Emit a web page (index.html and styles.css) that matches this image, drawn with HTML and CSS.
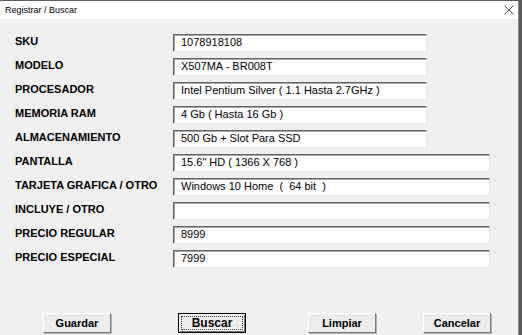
FILE: index.html
```html
<!DOCTYPE html>
<html>
<head>
<meta charset="utf-8">
<link rel="stylesheet" href="styles.css">
</head>
<body>
<div class="window">
  <div class="titlebar">
    <span class="title">Registrar / Buscar</span>
    <svg class="close" width="10" height="10" viewBox="0 0 10 10"><path d="M0.5 0.5 L9.5 9.5 M9.5 0.5 L0.5 9.5" stroke="#333" stroke-width="0.9"/></svg>
  </div>
  <div class="body">
    <div class="form">
      <div class="row"><span class="label">SKU</span><div class="field short">1078918108</div></div>
      <div class="row"><span class="label">MODELO</span><div class="field short">X507MA - BR008T</div></div>
      <div class="row"><span class="label">PROCESADOR</span><div class="field short">Intel Pentium Silver ( 1.1 Hasta 2.7GHz )</div></div>
      <div class="row"><span class="label">MEMORIA RAM</span><div class="field short">4 Gb ( Hasta 16 Gb )</div></div>
      <div class="row"><span class="label">ALMACENAMIENTO</span><div class="field short">500 Gb + Slot Para SSD</div></div>
      <div class="row"><span class="label">PANTALLA</span><div class="field long">15.6" HD ( 1366 X 768 )</div></div>
      <div class="row"><span class="label">TARJETA GRAFICA / OTRO</span><div class="field long">Windows 10 Home&nbsp; (&nbsp; 64 bit&nbsp; )</div></div>
      <div class="row"><span class="label">INCLUYE / OTRO</span><div class="field long"></div></div>
      <div class="row"><span class="label">PRECIO REGULAR</span><div class="field long">8999</div></div>
      <div class="row"><span class="label">PRECIO ESPECIAL</span><div class="field long">7999</div></div>
    </div>
    <div class="buttons">
      <div class="btn b-guardar">Guardar</div>
      <div class="btn default b-buscar"><span class="focus">Buscar</span></div>
      <div class="btn b-limpiar">Limpiar</div>
      <div class="btn b-cancelar">Cancelar</div>
    </div>
  </div>
</div>
</body>
</html>
```

FILE: styles.css
```css
html, body {
  margin: 0;
  padding: 0;
  background: #5a5a5a;
}
body {
  width: 522px;
  height: 335px;
  overflow: hidden;
}
.window {
  width: 518px;
  height: 334px;
  margin-top: 1px;
  border-right: 1px solid #8c8c8c;
  background: #f0f0f0;
  display: flex;
  flex-direction: column;
  font-family: "Liberation Sans", Arial, sans-serif;
}
.titlebar {
  height: 18px;
  background: #ffffff;
  display: flex;
  align-items: center;
  justify-content: space-between;
  padding: 0 4px 0 5px;
}
.title {
  font-size: 9px;
  color: #000;
}
.close {
  display: block;
}
.body {
  flex: 1;
  display: flex;
  flex-direction: column;
  padding: 15px 0 2px 0;
}
.form {
  display: flex;
  flex-direction: column;
  gap: 6px;
  padding-left: 15px;
}
.row {
  display: flex;
  align-items: flex-start;
  height: 18px;
}
.label {
  width: 158px;
  font-size: 11px;
  font-weight: bold;
  color: #000;
  line-height: 14px;
}
.field {
  box-sizing: border-box;
  height: 18px;
  background: #fff;
  border-top: 1px solid #646464;
  border-left: 1px solid #646464;
  border-right: 1px solid #e8e8e8;
  border-bottom: 1px solid #e8e8e8;
  box-shadow: inset 1px 1px 0 #a8a8a8;
  font-size: 11px;
  line-height: 15px;
  padding-left: 7px;
  color: #000;
  white-space: nowrap;
}
.field.short { width: 254px; }
.field.long { width: 317px; }
.buttons {
  margin-top: auto;
  display: flex;
  padding-left: 43px;
}
.btn {
  box-sizing: border-box;
  width: 68px;
  height: 20px;
  background: #ececec;
  border-top: 1px solid #ffffff;
  border-left: 1px solid #ffffff;
  border-right: 1px solid #7a7a7a;
  border-bottom: 1px solid #7a7a7a;
  box-shadow: 1px 1px 0 #b4b4b4;
  font-size: 11px;
  font-weight: bold;
  color: #000;
  display: flex;
  align-items: center;
  justify-content: center;
}
.b-buscar { margin-left: 67px; }
.b-limpiar { margin-left: 62px; }
.b-cancelar { margin-left: 47px; }
.btn.default {
  border: 1px solid #000;
  box-shadow: inset 1px 1px 0 #fff, inset -1px -1px 0 #7a7a7a;
  padding: 2px;
}
.focus {
  box-sizing: border-box;
  width: 100%;
  height: 100%;
  border: 1px dotted #444;
  display: flex;
  align-items: center;
  justify-content: center;
  font-size: 12px;
}
```
